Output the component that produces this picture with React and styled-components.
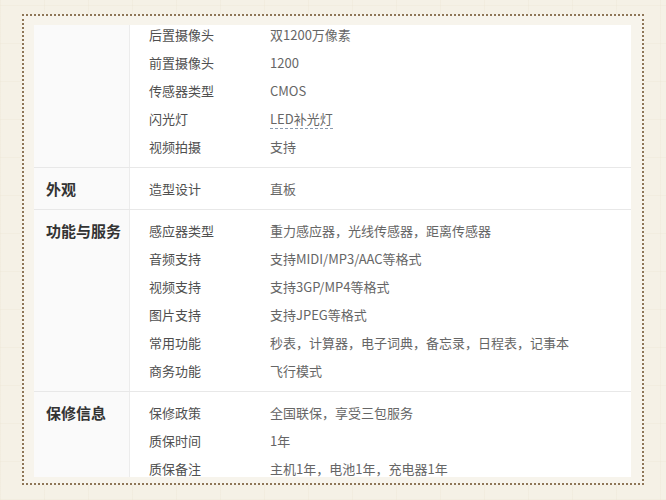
import React from "react";
import styled, { createGlobalStyle } from "styled-components";

const Global = createGlobalStyle`
  html, body { margin: 0; padding: 0; }
  body {
    width: 666px;
    height: 500px;
    overflow: hidden;
    background-color: #f5f1e6;
    background-image:
      repeating-linear-gradient(0deg, rgba(228,218,195,0.18) 0 1px, transparent 1px 38px),
      repeating-linear-gradient(90deg, rgba(228,218,195,0.18) 0 1px, transparent 1px 44px);
    font-family: "Noto Sans CJK SC", "Noto Sans", sans-serif;
  }
`;

const Frame = styled.div`
  box-sizing: border-box;
  margin: 14px 0 0 22px;
  width: 622px;
  height: 471px;
  border: 2px dotted #8e7657;
  padding: 9px 11px 6px 10px;
  display: flex;
  background: #f7f4ec;
`;

const Sheet = styled.div`
  flex: 1;
  background: #fff;
  overflow: hidden;
`;

const Table = styled.div`
  margin-top: -11px;
  display: flex;
  flex-direction: column;
`;

const Group = styled.section`
  display: grid;
  grid-template-columns: 96px 1fr;
  border-bottom: 1px solid #e8e8e8;
`;

const GroupTitle = styled.div`
  background: #fafafa;
  border-right: 1px solid #ececec;
  padding: 7px 0 0 12px;
  font-size: 15px;
  font-weight: 700;
  line-height: 28px;
  color: #333;
`;

const Rows = styled.div`
  padding: 7px 0 6px;
`;

const Row = styled.div`
  display: grid;
  grid-template-columns: 121px 1fr;
  height: 28px;
  line-height: 28px;
  padding-left: 19px;
  font-size: 13px;
`;

const Label = styled.span`
  color: #4f4f4f;
`;

const Value = styled.span`
  color: #666;
`;

const Linked = styled.span`
  border-bottom: 1px dashed #8a9bb0;
  line-height: 18px;
  display: inline-block;
`;

const groups = [
  {
    title: "",
    rows: [
      ["后置摄像头", "双1200万像素"],
      ["前置摄像头", "1200"],
      ["传感器类型", "CMOS"],
      ["闪光灯", "LED补光灯", true],
      ["视频拍摄", "支持"],
    ],
  },
  { title: "外观", rows: [["造型设计", "直板"]] },
  {
    title: "功能与服务",
    rows: [
      ["感应器类型", "重力感应器，光线传感器，距离传感器"],
      ["音频支持", "支持MIDI/MP3/AAC等格式"],
      ["视频支持", "支持3GP/MP4等格式"],
      ["图片支持", "支持JPEG等格式"],
      ["常用功能", "秒表，计算器，电子词典，备忘录，日程表，记事本"],
      ["商务功能", "飞行模式"],
    ],
  },
  {
    title: "保修信息",
    rows: [
      ["保修政策", "全国联保，享受三包服务"],
      ["质保时间", "1年"],
      ["质保备注", "主机1年，电池1年，充电器1年"],
    ],
  },
];

export default function App() {
  return (
    <>
      <Global />
      <Frame>
        <Sheet>
          <Table>
            {groups.map((g, i) => (
              <Group key={i}>
                <GroupTitle>{g.title}</GroupTitle>
                <Rows>
                  {g.rows.map(([l, v, link]) => (
                    <Row key={l}>
                      <Label>{l}</Label>
                      <Value>{link ? <Linked>{v}</Linked> : v}</Value>
                    </Row>
                  ))}
                </Rows>
              </Group>
            ))}
          </Table>
        </Sheet>
      </Frame>
    </>
  );
}
